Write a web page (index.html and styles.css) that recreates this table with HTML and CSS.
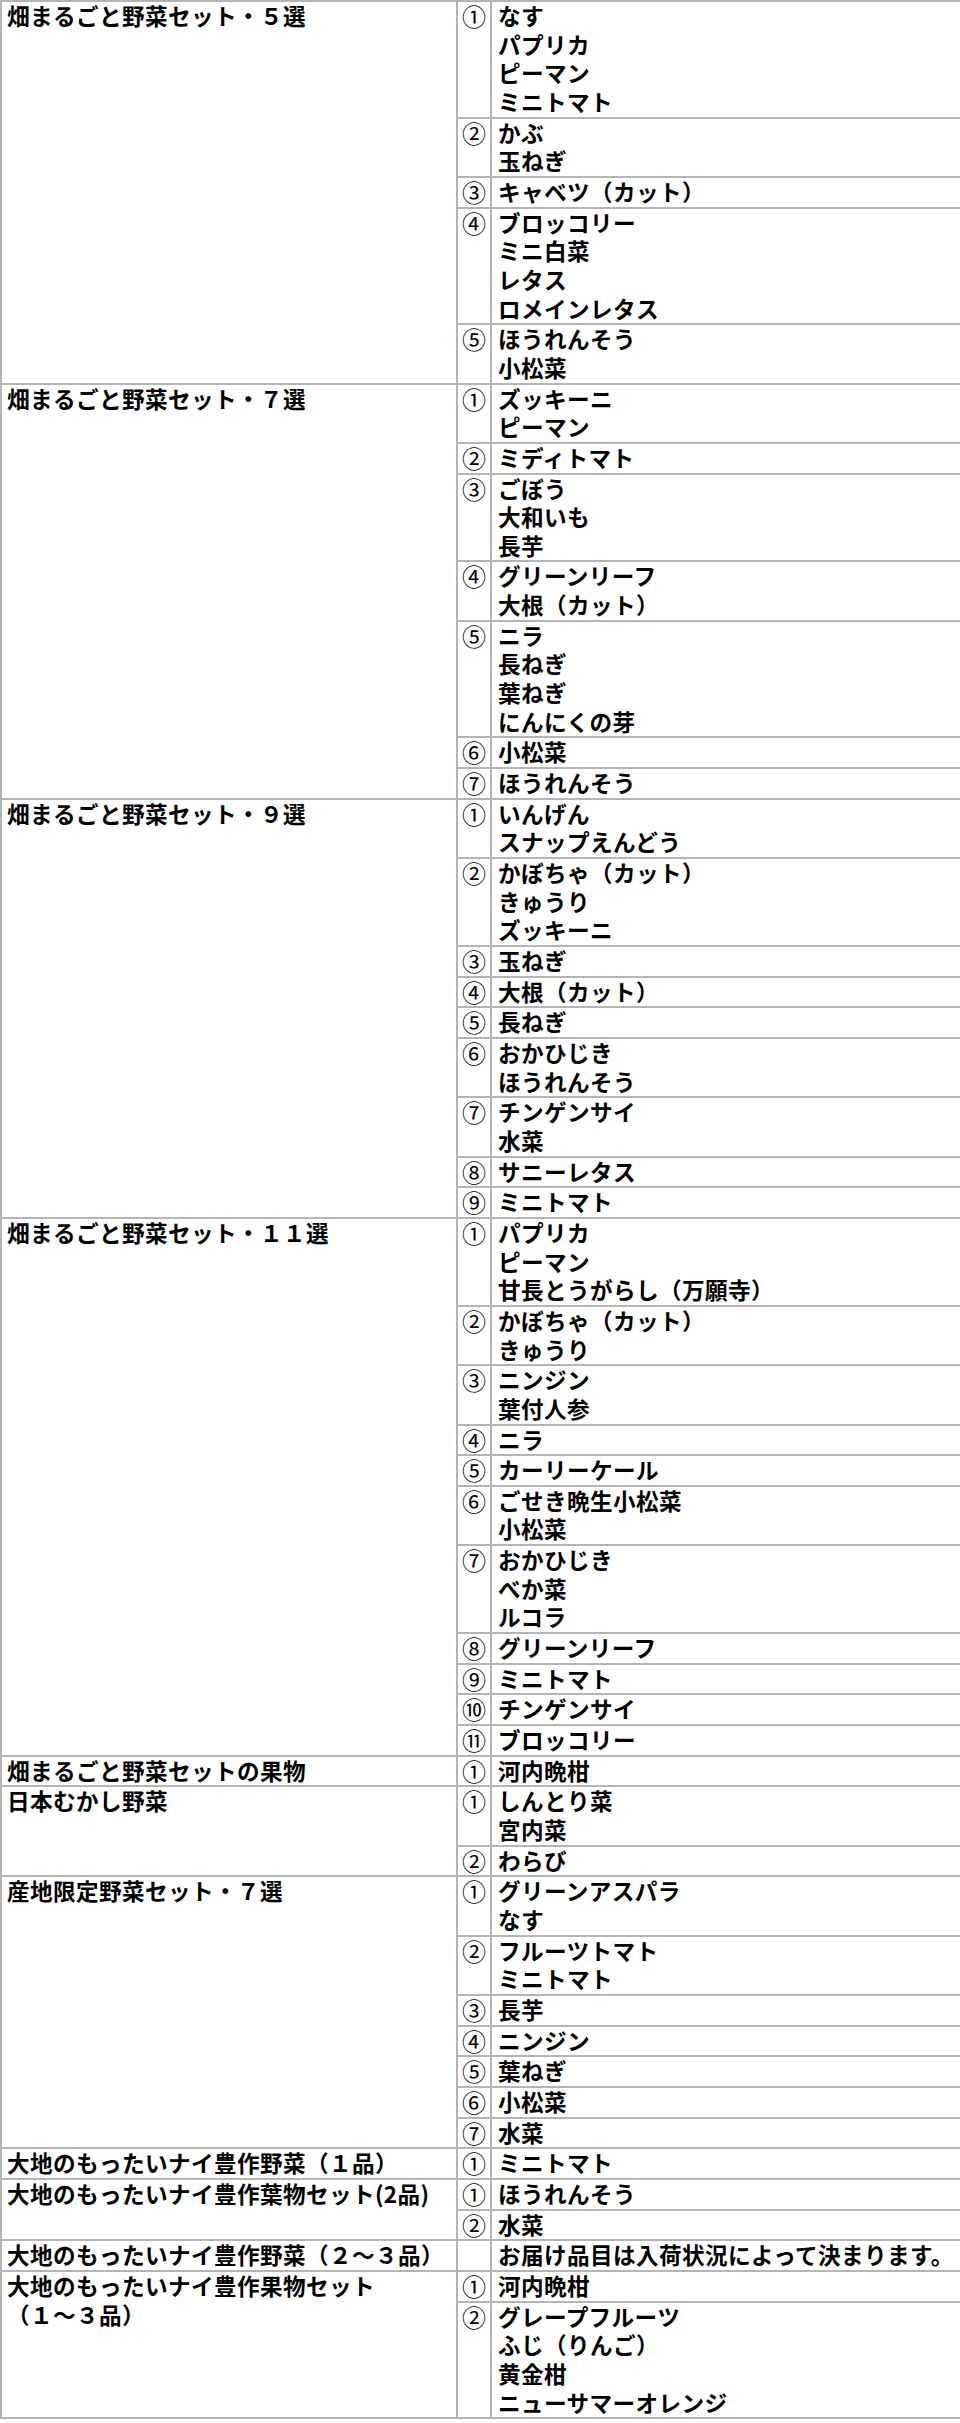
FILE: index.html
```html
<!DOCTYPE html>
<html lang="ja">
<head>
<meta charset="utf-8">
<title>セット内容</title>
<link rel="stylesheet" href="styles.css">
</head>
<body>
<table class="list">
<colgroup><col class="c-name"><col class="c-num"><col class="c-item"></colgroup>
<tbody>
<tr><td class="name" rowspan="5">畑まるごと野菜セット・５選</td><td class="num">①</td><td class="item">なす<br>パプリカ<br>ピーマン<br>ミニトマト</td></tr>
<tr><td class="num">②</td><td class="item">かぶ<br>玉ねぎ</td></tr>
<tr><td class="num">③</td><td class="item">キャベツ（カット）</td></tr>
<tr><td class="num">④</td><td class="item">ブロッコリー<br>ミニ白菜<br>レタス<br>ロメインレタス</td></tr>
<tr><td class="num">⑤</td><td class="item">ほうれんそう<br>小松菜</td></tr>

<tr><td class="name" rowspan="7">畑まるごと野菜セット・７選</td><td class="num">①</td><td class="item">ズッキーニ<br>ピーマン</td></tr>
<tr><td class="num">②</td><td class="item">ミディトマト</td></tr>
<tr><td class="num">③</td><td class="item">ごぼう<br>大和いも<br>長芋</td></tr>
<tr><td class="num">④</td><td class="item">グリーンリーフ<br>大根（カット）</td></tr>
<tr><td class="num">⑤</td><td class="item">ニラ<br>長ねぎ<br>葉ねぎ<br>にんにくの芽</td></tr>
<tr><td class="num">⑥</td><td class="item">小松菜</td></tr>
<tr><td class="num">⑦</td><td class="item">ほうれんそう</td></tr>

<tr><td class="name" rowspan="9">畑まるごと野菜セット・９選</td><td class="num">①</td><td class="item">いんげん<br>スナップえんどう</td></tr>
<tr><td class="num">②</td><td class="item">かぼちゃ（カット）<br>きゅうり<br>ズッキーニ</td></tr>
<tr><td class="num">③</td><td class="item">玉ねぎ</td></tr>
<tr><td class="num">④</td><td class="item">大根（カット）</td></tr>
<tr><td class="num">⑤</td><td class="item">長ねぎ</td></tr>
<tr><td class="num">⑥</td><td class="item">おかひじき<br>ほうれんそう</td></tr>
<tr><td class="num">⑦</td><td class="item">チンゲンサイ<br>水菜</td></tr>
<tr><td class="num">⑧</td><td class="item">サニーレタス</td></tr>
<tr><td class="num">⑨</td><td class="item">ミニトマト</td></tr>

<tr><td class="name" rowspan="11">畑まるごと野菜セット・１１選</td><td class="num">①</td><td class="item">パプリカ<br>ピーマン<br>甘長とうがらし（万願寺）</td></tr>
<tr><td class="num">②</td><td class="item">かぼちゃ（カット）<br>きゅうり</td></tr>
<tr><td class="num">③</td><td class="item">ニンジン<br>葉付人参</td></tr>
<tr><td class="num">④</td><td class="item">ニラ</td></tr>
<tr><td class="num">⑤</td><td class="item">カーリーケール</td></tr>
<tr><td class="num">⑥</td><td class="item">ごせき晩生小松菜<br>小松菜</td></tr>
<tr><td class="num">⑦</td><td class="item">おかひじき<br>べか菜<br>ルコラ</td></tr>
<tr><td class="num">⑧</td><td class="item">グリーンリーフ</td></tr>
<tr><td class="num">⑨</td><td class="item">ミニトマト</td></tr>
<tr><td class="num">⑩</td><td class="item">チンゲンサイ</td></tr>
<tr><td class="num">⑪</td><td class="item">ブロッコリー</td></tr>

<tr><td class="name">畑まるごと野菜セットの果物</td><td class="num">①</td><td class="item">河内晩柑</td></tr>

<tr><td class="name" rowspan="2">日本むかし野菜</td><td class="num">①</td><td class="item">しんとり菜<br>宮内菜</td></tr>
<tr><td class="num">②</td><td class="item">わらび</td></tr>

<tr><td class="name" rowspan="7">産地限定野菜セット・７選</td><td class="num">①</td><td class="item">グリーンアスパラ<br>なす</td></tr>
<tr><td class="num">②</td><td class="item">フルーツトマト<br>ミニトマト</td></tr>
<tr><td class="num">③</td><td class="item">長芋</td></tr>
<tr><td class="num">④</td><td class="item">ニンジン</td></tr>
<tr><td class="num">⑤</td><td class="item">葉ねぎ</td></tr>
<tr><td class="num">⑥</td><td class="item">小松菜</td></tr>
<tr><td class="num">⑦</td><td class="item">水菜</td></tr>

<tr><td class="name">大地のもったいナイ豊作野菜（１品）</td><td class="num">①</td><td class="item">ミニトマト</td></tr>

<tr><td class="name" rowspan="2">大地のもったいナイ豊作葉物セット(2品)</td><td class="num">①</td><td class="item">ほうれんそう</td></tr>
<tr><td class="num">②</td><td class="item">水菜</td></tr>

<tr><td class="name">大地のもったいナイ豊作野菜（２～３品）</td><td class="num"></td><td class="item">お届け品目は入荷状況によって決まります。</td></tr>

<tr><td class="name" rowspan="2">大地のもったいナイ豊作果物セット<br>（１～３品）</td><td class="num">①</td><td class="item">河内晩柑</td></tr>
<tr><td class="num">②</td><td class="item">グレープフルーツ<br>ふじ（りんご）<br>黄金柑<br>ニューサマーオレンジ</td></tr>
</tbody>
</table>
</body>
</html>
```

FILE: styles.css
```css
html, body {
  margin: 0;
  padding: 0;
  background: #fff;
}

body {
  font-family: "Noto Sans CJK JP", "Noto Sans", sans-serif;
  font-size: 22.6px;
  line-height: 28.65px;
  letter-spacing: 0.4px;
  color: #000;
  font-weight: 700;
}

.list {
  width: 960px;
  border-collapse: collapse;
  table-layout: fixed;
}

.c-name { width: 456px; }
.c-num { width: 34px; }
.c-item { width: 470px; }

.list td {
  border: 2px solid #b4b4b4;
  vertical-align: top;
  padding: 0 4px 0 5px;
  white-space: nowrap;
}

.list td.num {
  padding: 0;
  font-size: 24px;
  letter-spacing: 0;
  font-weight: 400;
  text-align: center;
}

.list td.item {
  padding: 0 0 0 6px;
}
```
